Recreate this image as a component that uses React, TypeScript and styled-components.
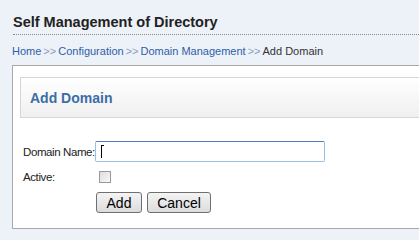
import React from "react";
import styled, { createGlobalStyle } from "styled-components";

const Global = createGlobalStyle`
  html, body { margin: 0; padding: 0; background: #edf1f8; }
  body { font-family: "Liberation Sans", Arial, sans-serif; overflow: hidden; }
`;

const Page = styled.div`
  width: 419px;
  height: 239px;
  padding: 14px 0 0 12px;
  box-sizing: border-box;
  overflow: hidden;
`;

const Title = styled.h1`
  margin: 0 -4px 0 1px;
  font-size: 14.5px;
  font-weight: bold;
  color: #222;
  line-height: 17px;
  padding-bottom: 3px;
  border-bottom: 1px dotted #8a8a8a;
`;

const Crumbs = styled.div`
  margin-top: 10px;
  font-size: 11px;
  line-height: 13px;
  color: #333;
  white-space: nowrap;
`;

const Crumb = styled.a`
  color: #2f5fa8;
  text-decoration: none;
`;

const Sep = styled.span`
  color: #8a9bc0;
  margin: 0 2px;
`;

const Panel = styled.div`
  margin-top: 7px;
  background: #fff;
  border: 1px solid #a8a8a8;
  border-right: none;
  height: 164px;
  box-sizing: border-box;
  padding: 11px 0 0 7px;
`;

const PanelHead = styled.div`
  height: 41px;
  box-sizing: border-box;
  border: 1px solid #d6d6d6;
  border-right: none;
  background: linear-gradient(#ffffff, #f0f0f0);
  display: flex;
  align-items: center;
  padding-left: 9px;
  font-size: 14px;
  font-weight: bold;
  color: #3b6da6;
`;

const Form = styled.div`
  margin-top: 23px;
  display: grid;
  grid-template-columns: 72px auto;
  grid-template-rows: 21px 24px 21px;
  row-gap: 3px;
  padding-left: 3px;
  align-items: center;
`;

const Label = styled.label`
  font-size: 11.5px;
  letter-spacing: -0.4px;
  color: #222;
  white-space: nowrap;
`;

const Input = styled.div`
  width: 230px;
  height: 21px;
  box-sizing: border-box;
  border: 1px solid #9cc0e0;
  border-top-color: #4a7eb8;
  border-radius: 2px;
  position: relative;
`;

const Caret = styled.span`
  position: absolute;
  left: 5px;
  top: 3px;
  width: 1px;
  height: 13px;
  background: #000;
  &::after {
    content: "";
    position: absolute;
    left: 0;
    top: 0;
    width: 3px;
    height: 1px;
    background: #000;
  }
`;

const Check = styled.span`
  display: block;
  margin-left: 4px;
  width: 12px;
  height: 12px;
  box-sizing: border-box;
  border: 1px solid #9a9a9a;
  background: linear-gradient(135deg, #dcdcdc, #f8f8f8);
`;

const Buttons = styled.div`
  display: flex;
  gap: 5px;
  margin-left: 1px;
`;

const Button = styled.button<{ w: number }>`
  width: ${(p) => p.w}px;
  height: 21px;
  box-sizing: border-box;
  border: 1px solid #707070;
  border-radius: 3px;
  background: linear-gradient(#f4f4f4, #dcdcdc);
  font-family: "Liberation Sans", Arial, sans-serif;
  font-size: 14px;
  color: #000;
  padding: 0;
  line-height: 18px;
`;

export default function App() {
  return (
    <>
      <Global />
      <Page>
        <Title>Self Management of Directory</Title>
        <Crumbs>
          <Crumb>Home</Crumb>
          <Sep>&gt;&gt;</Sep>
          <Crumb>Configuration</Crumb>
          <Sep>&gt;&gt;</Sep>
          <Crumb>Domain Management</Crumb>
          <Sep>&gt;&gt;</Sep>
          Add Domain
        </Crumbs>
        <Panel>
          <PanelHead>Add Domain</PanelHead>
          <Form>
            <Label>Domain Name:</Label>
            <Input>
              <Caret />
            </Input>
            <Label>Active:</Label>
            <Check />
            <span />
            <Buttons>
              <Button w={46}>Add</Button>
              <Button w={64}>Cancel</Button>
            </Buttons>
          </Form>
        </Panel>
      </Page>
    </>
  );
}
